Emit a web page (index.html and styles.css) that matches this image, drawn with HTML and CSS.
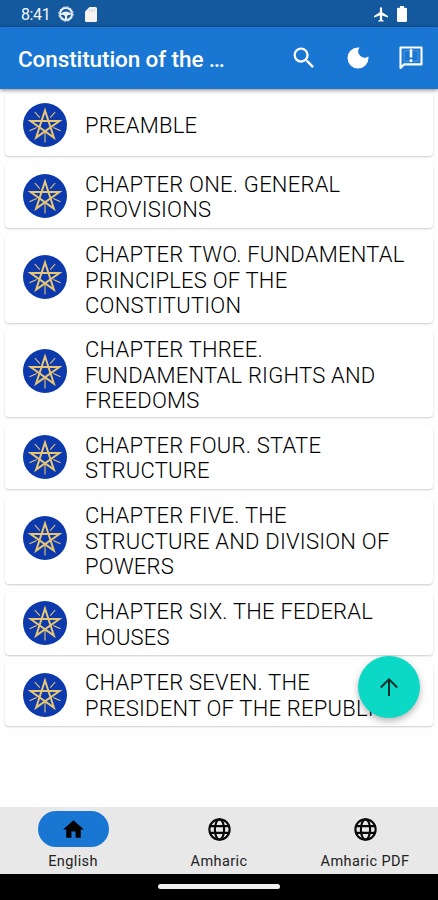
FILE: index.html
```
<!DOCTYPE html>
<html lang="en">
<head>
<meta charset="utf-8">
<meta name="viewport" content="width=device-width, initial-scale=1">
<title>Constitution</title>
<link rel="stylesheet" href="styles.css">
</head>
<body>
<svg class="defs" aria-hidden="true">
  <symbol id="emblem" viewBox="0 0 44 44">
    <circle cx="22" cy="22" r="22" fill="#0c3aad"/>
    <g fill="none" stroke="#e6c574" stroke-linejoin="miter">
      <path stroke-width="2" d="M22 7.500 30.900 34.600 7.600 18H36.400L13.100 34.600Z"/>
      <path stroke-width="1.1" d="M22 29V39.500M16.800 14.700 11.800 9M27.200 14.700 32.200 9M13.700 24.600 6.500 27.800M30.300 24.600 37.500 27.800"/>
    </g>
  </symbol>
  <symbol id="globe" viewBox="0 0 24 24">
    <g fill="none" stroke="#080808" stroke-width="1.9"><circle cx="12" cy="12" r="9"/><ellipse cx="12" cy="12" rx="4.1" ry="9"/><path d="M3.7 9H20.3M3.7 15H20.3"/></g>
  </symbol>
</svg>
<div class="app">
  <div class="status">
    <span class="time">8:41</span>
    <svg class="wheel" viewBox="0 0 16 16"><circle cx="8" cy="8" r="6" fill="none" stroke="#e8eef5" stroke-width="1.8"/><circle cx="8" cy="8" r="7.2" fill="none" stroke="#e8eef5" stroke-width="1" stroke-dasharray="2.4 1.37"/><path d="M3 7.2Q8 3.6 13 7.2L12.5 9H10L9 10.5V13H7V10.5L6 9H3.5Z" fill="#e8eef5"/></svg>
    <svg class="sd" viewBox="0 0 12 15"><path d="M4.5 0H10.5Q12 0 12 1.5V13.5Q12 15 10.5 15H1.5Q0 15 0 13.5V4.5Z" fill="#f3f3f3"/><path d="M4.7 2V4.7M7 2V4.7M9.3 2V4.7" stroke="#b9c8d8" stroke-width=".8"/></svg>
    <svg class="plane" viewBox="2 2 19 20"><path fill="#fff" d="M21 16v-2l-8-5V3.5a1.5 1.5 0 0 0-3 0V9l-8 5v2l8-2.5V19l-2 1.5V22l3.5-1 3.5 1v-1.500L13 19v-5.500z"/></svg>
    <svg class="battery" viewBox="0 0 10 16"><path fill="#fff" d="M3 0H7V1.700H8.700Q10 1.700 10 3V14.700Q10 16 8.700 16H1.300Q0 16 0 14.700V3Q0 1.700 1.300 1.700H3Z"/></svg>
  </div>
  <header class="bar">
    <h1>Constitution of the …</h1>
    <svg class="search" viewBox="0 0 24 24"><path fill="#fff" d="M15.500 14h-.79l-.28-.27A6.470 6.470 0 0 0 16 9.500 6.500 6.500 0 1 0 9.500 16c1.610 0 3.090-.59 4.230-1.570l.27.28v.79l5 4.990L20.490 19zm-6 0C7.010 14 5 11.990 5 9.500S7.010 5 9.500 5 14 7.010 14 9.500 11.990 14 9.500 14z"/></svg>
    <svg class="moon" viewBox="0 0 24 24"><path fill="#fff" d="M12 3a9 9 0 1 0 9 9c0-.46-.04-.92-.1-1.360A5.400 5.400 0 0 1 13.360 3.100C12.920 3.040 12.460 3 12 3z"/></svg>
    <svg class="note" viewBox="0 0 24 24"><g fill="none" stroke="#fff" stroke-width="1.8"><path stroke-linejoin="round" d="M3 20.500V3H21V17.500H6Z"/><path d="M12 4.500V11.500M12 13V15.500" stroke-width="2.200"/><path d="M6 5.800H18V14.700H6Z" stroke-width=".5" opacity=".4"/></g></svg>
  </header>
  <main class="list">
    <article class="card"><svg class="emblem"><use href="#emblem"/></svg><p>PREAMBLE</p></article>
    <article class="card"><svg class="emblem"><use href="#emblem"/></svg><p>CHAPTER ONE. GENERAL<br>PROVISIONS</p></article>
    <article class="card tall"><svg class="emblem"><use href="#emblem"/></svg><p>CHAPTER TWO. FUNDAMENTAL<br>PRINCIPLES OF THE<br>CONSTITUTION</p></article>
    <article class="card tall"><svg class="emblem"><use href="#emblem"/></svg><p>CHAPTER THREE.<br>FUNDAMENTAL RIGHTS AND<br>FREEDOMS</p></article>
    <article class="card"><svg class="emblem"><use href="#emblem"/></svg><p>CHAPTER FOUR. STATE<br>STRUCTURE</p></article>
    <article class="card tall"><svg class="emblem"><use href="#emblem"/></svg><p>CHAPTER FIVE. THE<br>STRUCTURE AND DIVISION OF<br>POWERS</p></article>
    <article class="card"><svg class="emblem"><use href="#emblem"/></svg><p>CHAPTER SIX. THE FEDERAL<br>HOUSES</p></article>
    <article class="card"><svg class="emblem"><use href="#emblem"/></svg><p>CHAPTER SEVEN. THE<br>PRESIDENT OF THE REPUBLIC</p></article>
  </main>
  <button class="fab" aria-label="Scroll to top"><svg viewBox="0 0 18 18"><path fill="none" stroke="#04302c" stroke-width="2" d="M9 18V1.500M.8 9.500 9 1.300 17.200 9.500"/></svg></button>
  <nav class="tabs">
    <a class="tab active"><span class="pill"><svg viewBox="0 0 24 24"><path d="M10 20v-6h4v6h5v-8h3L12 3 2 12h3v8z"/></svg></span><span>English</span></a>
    <a class="tab"><span class="pill"><svg><use href="#globe"/></svg></span><span>Amharic</span></a>
    <a class="tab"><span class="pill"><svg><use href="#globe"/></svg></span><span>Amharic PDF</span></a>
  </nav>
  <div class="gesture"><span></span></div>
</div>
</body>
</html>
```
FILE: styles.css
```
* { box-sizing: border-box; }
body { margin: 0; font-family: Roboto, sans-serif; background: #fefefe; }
.defs { display: block; width: 0; height: 0; }
.app { position: relative; width: 438px; height: 900px; display: flex; flex-direction: column; overflow: hidden; }
svg { display: block; flex: none; }
.status { height: 27px; flex: none; background: #14599d; color: #f2f6fa; display: flex; align-items: center; padding: 1px 31px 0 21px; }
.time { width: 37px; font-size: 16px; letter-spacing: -.4px; }
.wheel { width: 16px; height: 16px; }
.sd { width: 12px; height: 15px; margin-left: 11px; }
.plane { width: 14px; height: 15px; margin-left: auto; }
.battery { width: 10px; height: 16px; margin-left: 9px; }
.bar { height: 62px; flex: none; background: #1976d2; display: flex; align-items: center; padding: 0 13px 0 18px; z-index: 1; box-shadow: 0 1px 4px rgba(0,0,0,.5); }
h1 { flex: 1; margin: 1px 0 0; color: #fff; font-size: 22.500px; font-weight: 500; letter-spacing: -.1px; white-space: nowrap; }
.search { width: 28px; height: 28px; }
.moon { width: 28px; height: 28px; margin-left: 26px; }
.note { width: 28px; height: 28px; margin-left: 25px; }
.list { flex: 1; min-height: 0; padding: 4px 5px 0; display: flex; flex-direction: column; gap: 8px; }
.card { flex: none; min-height: 63.400px; padding: 5px 0 5px 18px; display: flex; align-items: center; gap: 18px; background: #fff; border-radius: 4px; box-shadow: 0 1px 2px rgba(0,0,0,.2); }
.emblem { width: 44px; height: 44px; }
.tall .emblem { margin-bottom: 5px; }
.card p { margin: 1.400px 0 -1.400px; font-size: 22px; line-height: 25.600px; font-weight: 300; color: #000; letter-spacing: .22px; white-space: nowrap; }
.fab { position: absolute; left: 358px; top: 655.500px; width: 62px; height: 62px; border: 0; border-radius: 50%; background: #0bd9c5; display: grid; place-items: center; padding: 0; box-shadow: 0 3px 7px rgba(0,0,0,.3); z-index: 2; }
.fab svg { width: 18px; height: 18px; }
.tabs { height: 67px; flex: none; background: #e8e8e8; display: grid; grid-template-columns: repeat(3, 1fr); }
.tab { display: flex; flex-direction: column; align-items: center; padding-top: 4px; font-size: 14.500px; line-height: 18px; letter-spacing: .4px; color: #222; gap: 6px; }
.pill { width: 71px; height: 36px; border-radius: 18px; display: grid; place-items: center; }
.pill svg { width: 27px; height: 27px; }
.active .pill { background: #1976d2; }
.active .pill svg { width: 25px; height: 25px; }
.gesture { height: 26px; flex: none; background: #000; display: flex; justify-content: center; padding-top: 10px; }
.gesture span { width: 122px; height: 5px; border-radius: 3px; background: #f0f0f0; }
```
